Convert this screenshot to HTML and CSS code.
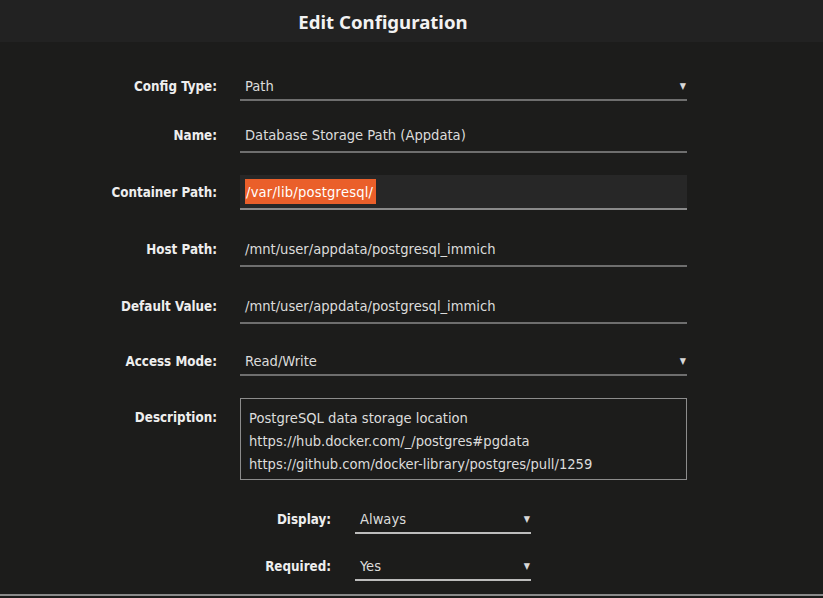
FILE: index.html
```html
<!DOCTYPE html>
<html lang="en">

<head>
  <meta charset="UTF-8">
  <meta name="viewport" content="width=device-width, initial-scale=1.0">
  <title>Edit Configuration</title>
  <link rel="stylesheet" href="styles.css">
</head>

<body>

  <div class="title-bar">
    <h1>Edit Configuration</h1>
  </div>

  <div class="config-type">
    <div class="row">
      <div class="label">Config Type:</div>
      <div class="field select">Path<span class="caret">&#9660;</span></div>
    </div>
  </div>

  <div class="config-form">
    <div class="row">
      <div class="label">Name:</div>
      <div class="field">Database Storage Path (Appdata)</div>
    </div>
    <div class="row">
      <div class="label">Container Path:</div>
      <div class="field focused"><span class="selected">/var/lib/postgresql/</span></div>
    </div>
    <div class="row">
      <div class="label">Host Path:</div>
      <div class="field">/mnt/user/appdata/postgresql_immich</div>
    </div>
    <div class="row">
      <div class="label">Default Value:</div>
      <div class="field">/mnt/user/appdata/postgresql_immich</div>
    </div>
    <div class="row">
      <div class="label">Access Mode:</div>
      <div class="field select">Read/Write<span class="caret">&#9660;</span></div>
    </div>
    <div class="row top">
      <div class="label">Description:</div>
      <div class="textarea">
        PostgreSQL data storage location<br>
        https://hub.docker.com/_/postgres#pgdata<br>
        https://github.com/docker-library/postgres/pull/1259
      </div>
    </div>
  </div>

  <div class="options">
    <div class="row">
      <div class="label">Display:</div>
      <div class="field select">Always<span class="caret">&#9660;</span></div>
    </div>
    <div class="row">
      <div class="label">Required:</div>
      <div class="field select">Yes<span class="caret">&#9660;</span></div>
    </div>
  </div>

  <div class="footer-line"></div>

</body>

</html>
```

FILE: styles.css
```css
body {
  margin: 0;
  background-color: #1c1c1b;
  color: #dcdcdc;
  font-family: "DejaVu Sans Condensed", "DejaVu Sans", sans-serif;
  font-size: 14.6px;
  overflow: hidden;
}

.title-bar {
  height: 42px;
  background-color: #222222;
  display: flex;
  align-items: center;
  justify-content: center;
  padding-right: 57px;
}

.title-bar h1 {
  margin: 0;
  font-family: "Noto Sans", sans-serif;
  font-size: 18.6px;
  font-weight: 700;
  color: #f2f2f2;
}

.config-type {
  padding-top: 29px;
  margin-bottom: 17px;
}

.config-form {
  display: flex;
  flex-direction: column;
  gap: 22px;
}

.row {
  display: grid;
  grid-template-columns: 217px 447px;
  column-gap: 23px;
  align-items: center;
}

.row.top {
  align-items: start;
}

.row.top .label {
  padding-top: 12px;
}

.label {
  text-align: right;
  font-size: 13.3px;
  font-weight: 700;
  color: #eeeeee;
}

.field {
  position: relative;
  height: 33px;
  line-height: 33px;
  padding-left: 5px;
  border-bottom: 2px solid #6e6e6e;
  white-space: nowrap;
}

.field.select {
  height: 28px;
  line-height: 30px;
}

.field.focused {
  background-color: #272727;
  border-bottom-color: #8a8a8a;
}

.selected {
  background-color: #ea5f2a;
  color: #ffffff;
  padding: 4px 3px 4px 1px;
  letter-spacing: 0.2px;
}

.caret {
  position: absolute;
  right: 1px;
  top: 0;
  font-size: 9px;
  color: #d8d8d8;
}

.textarea {
  height: 66px;
  padding: 7px 8px;
  line-height: 23px;
  border: 1px solid #8c8c8c;
}

.options {
  margin-top: 24px;
  display: flex;
  flex-direction: column;
  gap: 17px;
}

.options .row {
  grid-template-columns: 331px 176px;
  column-gap: 24px;
}

.options .field {
  border-bottom-color: #bcbcbc;
}

.footer-line {
  margin-top: 13px;
  height: 2px;
  background-color: #8a8a8a;
}
```
